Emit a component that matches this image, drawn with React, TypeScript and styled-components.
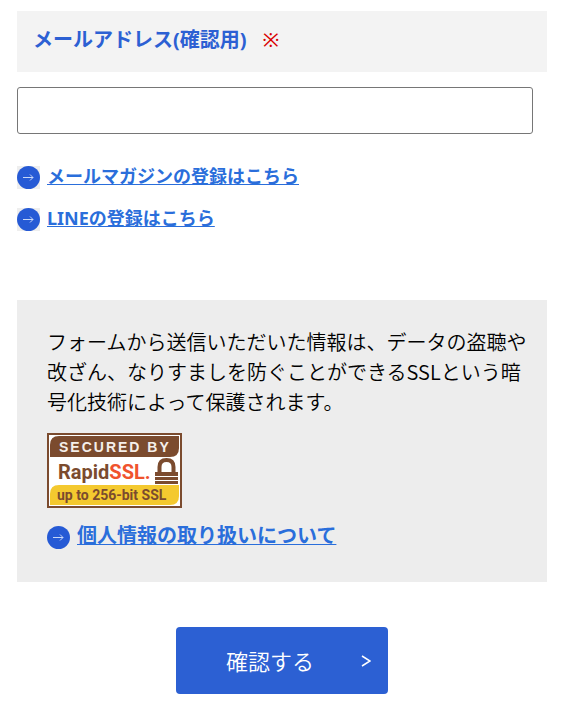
import React from "react";
import styled, { createGlobalStyle } from "styled-components";

const GlobalStyle = createGlobalStyle`
  *, *::before, *::after { box-sizing: border-box; }
  body {
    margin: 0;
    background: #fff;
    color: #000;
    font-family: "Noto Sans", "Noto Sans CJK JP", sans-serif;
    font-size: 20px;
  }
`;

const Page = styled.form`
  padding: 11px 17px 20px;
`;

const FieldLabel = styled.label`
  display: flex;
  align-items: center;
  gap: 16px;
  height: 61px;
  padding: 0 16px 4px;
  background: #f3f3f3;
  color: #2c60d3;
  font-size: 20px;
  font-weight: 700;
  line-height: 30px;
`;

const Required = styled.span`
  color: #d90000;
  font-weight: 400;
`;

const TextField = styled.input`
  display: block;
  width: calc(100% - 14px);
  height: 47px;
  margin-top: 15px;
  padding: 0 12px;
  border: 1px solid #767676;
  border-radius: 3px;
  background: #fff;
  font: inherit;
`;

const LinkList = styled.ul`
  display: grid;
  gap: 12px;
  margin: 28px 0 66px;
  padding: 0;
  list-style: none;
`;

const LinkRow = styled.a<{ $large?: boolean }>`
  display: flex;
  align-items: center;
  gap: 7px;
  color: #2a6edb;
  font-size: ${(p) => (p.$large ? "20px" : "18px")};
  font-weight: 700;
  line-height: 28px;
  text-underline-offset: 1px;
  text-decoration: none;
`;

const LinkText = styled.span`
  padding-bottom: 2px;
  text-decoration: underline;
  text-decoration-thickness: 1px;
  text-decoration-skip-ink: none;
`;

const ArrowMark = styled.span<{ $backdrop?: boolean }>`
  display: flex;
  flex: none;
  width: 23px;
  height: 23px;
  background: ${(p) => (p.$backdrop ? "#eee" : "transparent")};
`;

const Notice = styled.section`
  padding: 27px 20px 30px 30px;
  background: #ededed;
`;

const NoticeText = styled.p`
  margin: 0 0 16px;
  font-family: "Noto Sans CJK JP", sans-serif;
  font-weight: 350;
  line-height: 30px;
`;

const SealImage = styled.svg`
  display: block;
  margin-bottom: 14px;
`;

const SubmitButton = styled.button`
  display: flex;
  align-items: center;
  justify-content: space-between;
  width: 212px;
  height: 67px;
  margin: 45px auto 0;
  padding: 0 17px 0 50px;
  border: 0;
  border-radius: 4px;
  background: #2c60d3;
  color: #fff;
  font-family: inherit;
  font-size: 22px;
  font-weight: 350;
  line-height: 30px;
  cursor: pointer;
`;

function Arrow({ backdrop }: { backdrop?: boolean }) {
  return (
    <ArrowMark $backdrop={backdrop}>
      <svg width="23" height="23" viewBox="0 0 23 23" aria-hidden="true">
        <circle cx="11.5" cy="11.5" r="11.5" fill="#265ad5" />
        <path d="M6 11.5H16M13 8.5L16 11.5L13 14.5" fill="none" stroke="#c8d7f7" strokeWidth="1" />
      </svg>
    </ArrowMark>
  );
}

function IconLink({ href, large, backdrop, children }: {
  href: string;
  large?: boolean;
  backdrop?: boolean;
  children: React.ReactNode;
}) {
  return (
    <LinkRow href={href} $large={large}>
      <Arrow backdrop={backdrop} />
      <LinkText>{children}</LinkText>
    </LinkRow>
  );
}

function Seal() {
  return (
    <SealImage width="135" height="75" viewBox="0 0 135 75" role="img" aria-label="Secured by RapidSSL, up to 256-bit SSL">
      <rect x="1" y="1" width="133" height="73" fill="#fff" stroke="#7b4b2e" strokeWidth="2" />
      <path d="M3 24V12Q3 3 12 3H132V15Q132 24 123 24Z" fill="#7b4b2e" />
      <path d="M3 72V61Q3 52 12 52H132V63Q132 72 123 72Z" fill="#f4c92f" />
      <g fontFamily="'Liberation Sans', sans-serif" fontWeight="700">
        <text x="12" y="19" fontSize="14" letterSpacing="2" fill="#f5efea">SECURED BY</text>
        <g fontFamily="Roboto, sans-serif">
          <text x="11" y="46" fontSize="20" fill="#7b4b2e">Rapid<tspan fill="#f0532d">SSL.</tspan></text>
          <text x="10" y="67" fontSize="14" fill="#7b4b2e">up to 256-bit SSL</text>
        </g>
      </g>
      <path d="M112.500 41V34Q112.500 27 119.500 27Q126.500 27 126.500 34V41" fill="none" stroke="#7b4b2e" strokeWidth="4" />
      <path d="M108 39H131V43H108ZM108 44H131V47H108ZM108 48H131V51H108Z" fill="#7b4b2e" />
    </SealImage>
  );
}

export default function App() {
  return (
    <>
      <GlobalStyle />
      <Page onSubmit={(e) => e.preventDefault()}>
        <FieldLabel htmlFor="email-confirm">
          メールアドレス(確認用)
          <Required>※</Required>
        </FieldLabel>
        <TextField id="email-confirm" type="email" required />
        <LinkList>
          <li><IconLink href="#magazine" backdrop>メールマガジンの登録はこちら</IconLink></li>
          <li><IconLink href="#line" backdrop>LINEの登録はこちら</IconLink></li>
        </LinkList>
        <Notice>
          <NoticeText>
            フォームから送信いただいた情報は、データの盗聴や改ざん、なりすましを防ぐことができるSSLという暗号化技術によって保護されます。
          </NoticeText>
          <Seal />
          <IconLink href="#privacy" large>個人情報の取り扱いについて</IconLink>
        </Notice>
        <SubmitButton type="submit">
          確認する
          <svg width="10" height="14" viewBox="0 0 10 14" aria-hidden="true">
            <path d="M1 2L9 7L1 12" fill="none" stroke="#fff" strokeWidth="1.500" />
          </svg>
        </SubmitButton>
      </Page>
    </>
  );
}
